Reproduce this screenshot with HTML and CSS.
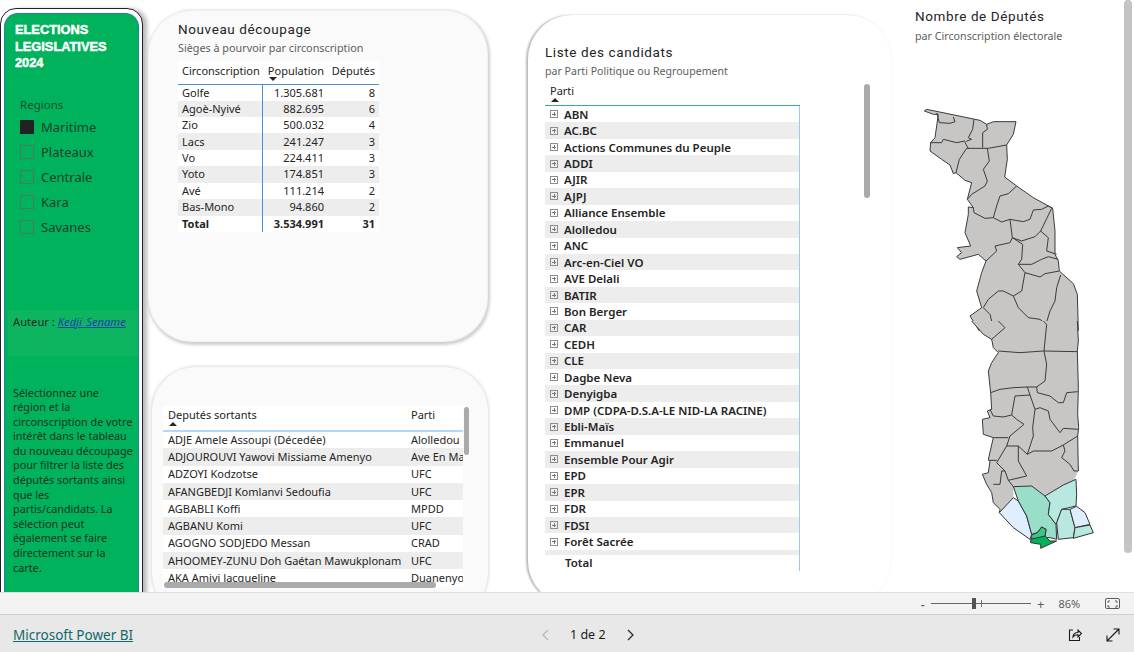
FILE: index.html
```html
<!DOCTYPE html>
<html lang="fr">
<head>
<meta charset="utf-8">
<title>Elections législatives 2024</title>
<link rel="stylesheet" href="styles.css">
</head>
<body>
<main class="canvas">
  <aside class="side-frame">
    <div class="side">
      <h1 class="side-title">ELECTIONS<br>LEGISLATIVES<br>2024</h1>
      <div class="slicer">
        <div class="slicer-label">Regions</div>
        <div class="slicer-row"><span class="box box-on"></span>Maritime</div>
        <div class="slicer-row"><span class="box"></span>Plateaux</div>
        <div class="slicer-row"><span class="box"></span>Centrale</div>
        <div class="slicer-row"><span class="box"></span>Kara</div>
        <div class="slicer-row"><span class="box"></span>Savanes</div>
      </div>
      <div class="author">Auteur : <a class="author-link" href="#">Kedji_Sename</a></div>
      <p class="help">Sélectionnez une<br>région et la<br>circonscription de votre<br>intérêt dans le tableau<br>du nouveau découpage<br>pour filtrer la liste des<br>députés sortants ainsi<br>que les<br>partis/candidats. La<br>sélection peut<br>également se faire<br>directement sur la<br>carte.</p>
    </div>
  </aside>

  <section class="col-mid">
    <div class="card card-top">
      <h2 class="title">Nouveau découpage</h2>
      <div class="subtitle">Sièges à pourvoir par circonscription</div>
      <table class="tbl tbl-dec">
        <thead>
          <tr><th class="c-name">Circonscription</th><th class="c-pop num-head"><span class="sort-wrap">Population<i class="arrow-down"></i></span></th><th class="c-dep num-head">Députés</th></tr>
        </thead>
        <tbody>
          <tr><td class="c-name">Golfe</td><td class="c-pop">1.305.681</td><td class="c-dep">8</td></tr>
          <tr class="alt"><td class="c-name">Agoè-Nyivé</td><td class="c-pop">882.695</td><td class="c-dep">6</td></tr>
          <tr><td class="c-name">Zio</td><td class="c-pop">500.032</td><td class="c-dep">4</td></tr>
          <tr class="alt"><td class="c-name">Lacs</td><td class="c-pop">241.247</td><td class="c-dep">3</td></tr>
          <tr><td class="c-name">Vo</td><td class="c-pop">224.411</td><td class="c-dep">3</td></tr>
          <tr class="alt"><td class="c-name">Yoto</td><td class="c-pop">174.851</td><td class="c-dep">3</td></tr>
          <tr><td class="c-name">Avé</td><td class="c-pop">111.214</td><td class="c-dep">2</td></tr>
          <tr class="alt"><td class="c-name">Bas-Mono</td><td class="c-pop">94.860</td><td class="c-dep">2</td></tr>
          <tr class="total"><td class="c-name">Total</td><td class="c-pop">3.534.991</td><td class="c-dep">31</td></tr>
        </tbody>
      </table>
    </div>
    <div class="card card-bottom">
      <div class="dep-wrap">
        <table class="tbl tbl-dep">
          <thead>
            <tr><th class="d-name"><span class="sort-wrap">Deputés sortants<i class="arrow-up"></i></span></th><th class="d-part">Parti</th></tr>
          </thead>
          <tbody>
            <tr><td class="d-name">ADJE Amele Assoupi (Décedée)</td><td class="d-part">Alolledou</td></tr>
            <tr class="alt"><td class="d-name">ADJOUROUVI Yawovi Missiame Amenyo</td><td class="d-part">Ave En Ma</td></tr>
            <tr><td class="d-name">ADZOYI Kodzotse</td><td class="d-part">UFC</td></tr>
            <tr class="alt"><td class="d-name">AFANGBEDJI Komlanvi Sedoufia</td><td class="d-part">UFC</td></tr>
            <tr><td class="d-name">AGBABLI Koffi</td><td class="d-part">MPDD</td></tr>
            <tr class="alt"><td class="d-name">AGBANU Komi</td><td class="d-part">UFC</td></tr>
            <tr><td class="d-name">AGOGNO SODJEDO Messan</td><td class="d-part">CRAD</td></tr>
            <tr class="alt"><td class="d-name">AHOOMEY-ZUNU Doh Gaétan Mawukplonam</td><td class="d-part">UFC</td></tr>
            <tr><td class="d-name">AKA Amivi Jacqueline</td><td class="d-part">Duanenyo</td></tr>
          </tbody>
        </table>
        <div class="thumb thumb-dep-v"></div>
        <div class="thumb thumb-dep-h"></div>
      </div>
    </div>
  </section>

  <section class="card card-list">
    <h2 class="title">Liste des candidats</h2>
    <div class="subtitle subtitle-list">par Parti Politique ou Regroupement</div>
    <div class="list">
      <div class="list-head"><span class="sort-wrap">Parti<i class="arrow-up"></i></span></div>
      <div class="list-row"><i class="plus"></i>ABN</div>
      <div class="list-row alt"><i class="plus"></i>AC.BC</div>
      <div class="list-row"><i class="plus"></i>Actions Communes du Peuple</div>
      <div class="list-row alt"><i class="plus"></i>ADDI</div>
      <div class="list-row"><i class="plus"></i>AJIR</div>
      <div class="list-row alt"><i class="plus"></i>AJPJ</div>
      <div class="list-row"><i class="plus"></i>Alliance Ensemble</div>
      <div class="list-row alt"><i class="plus"></i>Alolledou</div>
      <div class="list-row"><i class="plus"></i>ANC</div>
      <div class="list-row alt"><i class="plus"></i>Arc-en-Ciel VO</div>
      <div class="list-row"><i class="plus"></i>AVE Delali</div>
      <div class="list-row alt"><i class="plus"></i>BATIR</div>
      <div class="list-row"><i class="plus"></i>Bon Berger</div>
      <div class="list-row alt"><i class="plus"></i>CAR</div>
      <div class="list-row"><i class="plus"></i>CEDH</div>
      <div class="list-row alt"><i class="plus"></i>CLE</div>
      <div class="list-row"><i class="plus"></i>Dagbe Neva</div>
      <div class="list-row alt"><i class="plus"></i>Denyigba</div>
      <div class="list-row"><i class="plus"></i>DMP (CDPA-D.S.A-LE NID-LA RACINE)</div>
      <div class="list-row alt"><i class="plus"></i>Ebli-Maïs</div>
      <div class="list-row"><i class="plus"></i>Emmanuel</div>
      <div class="list-row alt"><i class="plus"></i>Ensemble Pour Agir</div>
      <div class="list-row"><i class="plus"></i>EPD</div>
      <div class="list-row alt"><i class="plus"></i>EPR</div>
      <div class="list-row"><i class="plus"></i>FDR</div>
      <div class="list-row alt"><i class="plus"></i>FDSI</div>
      <div class="list-row"><i class="plus"></i>Forêt Sacrée</div>
      <div class="list-sliver"></div>
      <div class="list-total">Total</div>
    </div>
    <div class="thumb thumb-list"></div>
  </section>

  <section class="col-map">
    <h2 class="title">Nombre de Députés</h2>
    <div class="subtitle subtitle-map">par Circonscription électorale</div>
    <svg class="map" viewBox="915 100 209 470" width="209" height="470" aria-label="Carte du Togo">
      <g transform="translate(900 90) scale(.33333)">
        <path class="land" d="M73 60 80 55 240 88 260 100 280 92 348 92 340 130 320 162 322 205 314 258 350 285 400 320 458 352 465 420 465 490 475 510 478 540 520 578 532 610 535 750 278 750 238 720 210 675 245 650 230 600 245 545 258 510 235 490 180 505 170 497 185 485 172 470 212 465 195 425 205 370 205 348 220 350 202 325 215 275 195 268 168 245 160 248 150 222 125 205 90 180 92 155 105 140 115 70 100 70Z"/>
        <path class="line" d="M73 60 80 55 240 88 260 100 280 92 348 92 340 130 320 162 322 205 314 258 350 285 400 320 458 352 465 420 465 490 475 510 478 540 520 578 532 610 535 720M238 720 210 675 245 650 230 600 245 545 258 510 235 490 180 505 170 497 185 485 172 470 212 465 195 425 205 370 205 348 220 350 202 325 215 275 195 268 168 245 160 248 150 222 125 205 90 180 92 155 105 140 115 70 100 70 73 60"/>
        <path class="line" d="M110 66 118 95 150 97 165 92 160 78M222 85 218 115 205 140 215 145 200 150 195 155 205 172M92 155 125 155 130 145 170 155 195 150M200 172 265 172 320 162M260 100 262 115 248 125 248 170M200 172 178 205 168 245M262 172 268 210 250 235 262 270 255 285 215 310 202 325M350 285 325 308 300 315 290 345 280 380 255 382 222 365 220 350M280 380 305 393 330 385 370 392 390 385 400 357 425 355 445 345 458 352M330 385 337 440 365 450 405 437 422 420 455 352M337 440 330 455 285 465 290 480 258 510M337 440 368 460 365 505 355 520 375 520 395 520 425 505 445 497 475 505M422 420 445 440 440 480 470 490M355 520 375 545 420 558 435 548 478 540M375 545 365 600 340 615 310 600 295 600 265 625 250 650M340 615 355 650 385 680 420 685 438 700 438 720M482 552 470 590 465 630 450 660 438 700M250 650 270 670 275 690 315 712 300 720"/>
      </g>
      <g transform="translate(950 320) scale(.33333)">
        <path class="land" d="M65 0 382 0 385 60 382 90 385 200 383 280 386 320 383 345 385 450 372 478 285 525 245 495 190 497 190 530 148 575 150 565 130 545 125 515 110 490 97 460 115 455 120 420 115 415 130 350 100 340 97 295 120 290 112 270 125 265 122 215 115 150 125 125 145 95 130 80 125 55 100 40Z"/>
        <path class="line" d="M65 0 100 40 125 55 130 80 145 95 125 125 115 150 122 215 125 265 112 270 120 290 97 295 100 340 130 350 115 415 120 420 115 455 97 460 110 490 125 515 130 545 150 565 148 575M382 0 385 60 382 90 385 200 383 280 386 320 383 345 385 450 372 450"/>
        <path class="line" d="M125 55 165 20 145 0M145 90 210 95 280 90 382 92M280 0 290 10 282 90 290 130 285 180 260 198 232 198 190 200 150 205 122 215M260 198 262 215 300 225 325 245 340 245 350 215 383 212M232 198 240 222 195 225 185 282 160 288 130 285 120 265M240 222 255 265 248 320 250 345 232 400 205 375 170 375 180 345 222 310 200 295 185 282M255 265 270 260 295 270 300 295 330 335 340 322 385 325M232 400 250 390 305 390 340 372 383 345M340 372 345 390 335 410 360 430 372 450M205 375 205 420 230 465 175 478 165 450 155 450 150 490 130 490M170 375 140 425 165 450M130 350 175 350M115 418 140 418M175 478 190 497"/>
        <path class="r-light" d="M190 530 205 540 230 585 245 640 240 655 190 620 148 575Z"/>
        <path class="r-mid" d="M190 497 245 495 285 525 300 545 295 580 318 610 320 655 300 650 285 650 288 625 275 618 262 635 245 640 230 585 205 540Z"/>
        <path class="r-teal" d="M285 525 340 492 378 475 380 520 378 555 335 565 320 605 318 610 295 580 300 545Z"/>
        <path class="r-teal" d="M320 605 335 565 360 565 375 620 370 650 325 655Z"/>
        <path class="r-light" d="M360 565 380 556 405 575 420 610 375 620Z"/>
        <path class="r-teal" d="M375 620 420 612 430 635 370 652Z"/>
        <path class="r-small" d="M245 642 262 635 275 618 288 625 285 648 245 655Z"/>
        <path class="r-golfe" d="M242 655 285 645 300 660 320 660 272 682 272 670 242 665Z"/>
      </g>
    </svg>
  </section>
  <div class="page-scroll"><div class="page-thumb"></div></div>
</main>

<div class="zoombar">
  <span class="zoom-minus">-</span>
  <div class="zoom-track"><i class="zoom-knob"></i><i class="zoom-tick"></i></div>
  <span class="zoom-plus">+</span>
  <span class="zoom-val">86%</span>
  <svg class="ico-fit" width="16" height="12" viewBox="0 0 16 12"><rect x=".5" y=".5" width="14" height="10" rx="1.5"/><path d="M3 5V3h2M10 3h2v2M12 7v2h-2M5 9H3V7"/></svg>
</div>
<footer class="footer">
  <a class="pbi" href="#">Microsoft Power BI</a>
  <nav class="pager">
    <svg class="chev chev-off" width="9" height="12" viewBox="0 0 9 12"><path d="M7 1 2 6l5 5"/></svg>
    <span class="pager-text">1 de 2</span>
    <svg class="chev" width="9" height="12" viewBox="0 0 9 12"><path d="M2 1l5 5-5 5"/></svg>
  </nav>
  <div class="foot-icons">
    <svg class="ico" width="14" height="14" viewBox="0 0 14 14"><path d="M5 2H1.500v10.500h10V9M5 9c0-3 2-4.500 5-4.500V2l3.500 3.500L10 9V6.800C8 6.800 6 7.300 5 9Z"/></svg>
    <svg class="ico" width="14" height="14" viewBox="0 0 14 14"><path d="M1 13 13 1M7.500 1H13v5.500M1 7.500V13h5.500"/></svg>
  </div>
</footer>
</body>
</html>
```

FILE: styles.css
```css
* { box-sizing: border-box; }
html, body { margin: 0; padding: 0; }
body {
  width: 1134px;
  height: 652px;
  overflow: hidden;
  background: #fff;
  font-family: "Noto Sans", "Open Sans", sans-serif;
  color: #252423;
}
h1, h2, p { margin: 0; font-weight: normal; }

.canvas { display: flex; height: 592px; overflow: hidden; background: #fff; }

/* Sidebar */
.side-frame {
  flex: none;
  width: 143px;
  height: 620px;
  margin: 8px 0 0 0;
  padding: 3.500px 3px 0;
  border: 1.500px solid #222;
  border-radius: 16px;
  background: #fff;
  box-shadow: 5px 0 4px -1px #bbb;
}
.side {
  height: 100%;
  background: #00b25b;
  border: 1px solid #1b84a0;
  border-bottom: 0;
  border-radius: 14px 14px 0 0;
  padding: 8.500px 0 0;
}
.side-title {
  margin-left: 10px;
  font: bold 12.800px/16.500px "Liberation Sans", Arial, sans-serif;
  color: #fff;
  -webkit-text-stroke: .5px #fff;
}
.slicer { margin: 25px 0 0 15px; }
.slicer-label { font-size: 11.500px; line-height: 16px; color: #14512f; margin-bottom: 2px; }
.slicer-row {
  display: flex;
  align-items: center;
  gap: 7px;
  height: 25px;
  font-size: 13px;
  color: #1d3f2c;
}
.box { width: 14px; height: 14px; border: 1px solid #4d7a5e; }
.box-on { background: #222; border-color: #222; }
.author {
  margin: 70px 0 0 3px;
  height: 46px;
  padding: 4px 0 0 5px;
  background: #0eb561;
  font-size: 11.200px;
  line-height: 16px;
  color: #1d2b24;
}
.author-link { color: #1f3fb0; font-style: italic; }
.help {
  margin: 30px 0 0 8px;
  font-size: 10.800px;
  line-height: 14.600px;
  color: #12331f;
  white-space: nowrap;
}

/* Cards */
.col-mid { flex: none; width: 346px; margin-left: 5px; }
.card { background: #fafafa; border-radius: 44px; }
.card-top {
  width: 340px;
  height: 332px;
  margin-top: 10px;
  padding: 10px 0 0 30px;
  box-shadow: 1px 1.500px 3px 1px #d0d0d0, inset 0 0 2px #ddd;
}
.card-bottom {
  width: 336px;
  height: 250px;
  margin: 25px 0 0 4px;
  padding: 39px 0 0 11px;
  box-shadow: 0 0 3px 1px #ddd;
}
.title {
  font: 400 13.500px/18px Roboto, sans-serif;
  letter-spacing: .6px;
  color: #252423;
}
.subtitle {
  margin-top: 2px;
  font-size: 10.800px;
  line-height: 16px;
  color: #605e5c;
}

/* Tables */
.tbl { border-collapse: collapse; table-layout: fixed; background: #fff; font-size: 11px; }
.tbl th { font-weight: normal; text-align: left; padding: 0; vertical-align: top; }
.tbl td { padding: 0; white-space: nowrap; overflow: hidden; }
.alt { background: #ededed; }
.sort-wrap { position: relative; display: inline-block; }
.arrow-down, .arrow-up { position: absolute; left: 1px; width: 0; height: 0; border: 4px solid transparent; }
.arrow-down { top: 14px; border-top: 4px solid #252423; border-bottom: 0; }
.arrow-up { top: 15px; border-bottom: 4px solid #252423; border-top: 0; }

.tbl-dec { width: 201px; margin-top: 5px; }
.tbl-dec thead tr { height: 23px; border-bottom: 1px solid #4a90d9; }
.tbl-dec th { padding-top: 2px; }
.tbl-dec tbody tr { height: 16.450px; line-height: 16px; }
.c-name { width: 84px; padding-left: 4px !important; border-right: 1px solid #4a90d9; }
.tbl-dec th.c-name { border-right: 0; }
.c-pop { width: 62px; text-align: right; }
.c-dep { width: 55px; text-align: right; padding-right: 4px !important; }
.num-head { text-align: right !important; }
.total td { font-weight: bold; }

.dep-wrap { position: relative; width: 306px; }
.tbl-dep { width: 300px; }
.tbl-dep thead tr { height: 25px; border-bottom: 2px solid #b5d7f5; }
.tbl-dep th { padding-top: 1px; }
.tbl-dep tbody tr { height: 17.300px; line-height: 16px; }
.d-name { width: 243px; padding-left: 5px !important; }
.d-part { width: 57px; padding-left: 5px !important; }
.thumb { position: absolute; background: #aaa; border-radius: 3px; }
.thumb-dep-v { left: 301px; top: 1px; width: 5px; height: 48px; }
.thumb-dep-h { left: 1px; top: 176px; width: 272px; height: 6px; }

/* List */
.card-list {
  position: relative;
  flex: none;
  width: 363px;
  height: 590px;
  margin: 15px 0 0 34px;
  padding: 28px 0 0 17px;
  background: #fff;
  box-shadow: -1.500px 0 2px #bbb;
  border-radius: 44px;
}
.subtitle-list { font-size: 10.600px; }
.list { width: 255px; margin-top: 4px; font-size: 11.500px; }
.list-head {
  height: 23px;
  padding: 0 0 0 5px;
  border-bottom: 1px solid #3b9bf0;
  font-size: 11px;
  line-height: 16px;
  background: #fff;
}
.list-row {
  display: flex;
  align-items: center;
  height: 16.450px;
  font-weight: 600;
  color: #252423;
  white-space: nowrap;
  border-right: 1px solid #9cc8f2;
}
.plus {
  flex: none;
  width: 8px;
  height: 8px;
  margin: 0 6px 0 5px;
  border: 1px solid #8d8d8d;
  background:
    linear-gradient(#777, #777) center / 4px 1px no-repeat,
    linear-gradient(#777, #777) center / 1px 4px no-repeat;
}
.list-sliver { height: 5px; background: #ededed; border-right: 1px solid #9cc8f2; }
.list-total { height: 16px; padding-left: 20px; font-weight: 600; line-height: 16px; border-right: 1px solid #9cc8f2; }
.thumb-list { left: 336px; top: 69px; width: 6px; height: 114px; }

/* Map */
.col-map { flex: none; width: 209px; margin-left: 24px; padding-top: 7px; }
.subtitle-map { margin-top: 3px; font-size: 10.700px; }
.map { display: block; margin-top: 57px; overflow: visible; }
.land { fill: #c8c6c4; stroke: none; }
.line { fill: none; stroke: #3a3a3a; stroke-width: 3; stroke-linejoin: round; }
.r-light, .r-mid, .r-teal, .r-small, .r-golfe { stroke: #333; stroke-width: 3; stroke-linejoin: round; }
.r-light { fill: #deeeff; }
.r-mid { fill: #98dec8; }
.r-teal { fill: #b9e8e0; }
.r-small { fill: #3fc487; }
.r-golfe { fill: #00b25b; }

.page-scroll { flex: none; width: 8px; }
.page-thumb { height: 553px; background: #c4c4c4; border-radius: 4px; }

/* Zoom bar */
.zoombar {
  display: flex;
  align-items: center;
  height: 23px;
  padding-left: 921px;
  background: #f3f3f3;
  border-top: 1px solid #e1e1e1;
  border-bottom: 1px solid #cfcfcf;
  font-size: 11px;
  color: #605e5c;
}
.zoom-minus { width: 10px; font-weight: bold; line-height: 12px; }
.zoom-track { position: relative; width: 100px; height: 1px; background: #666; }
.zoom-knob { position: absolute; left: 41px; top: -5px; width: 4px; height: 11px; background: #555; }
.zoom-tick { position: absolute; left: 50px; top: -3px; width: 1px; height: 7px; background: #777; }
.zoom-plus { margin-left: 6px; font-size: 13px; line-height: 14px; }
.zoom-val { margin-left: 14px; font-size: 11px; }
.ico-fit { margin-left: 25px; fill: none; stroke: #605e5c; }

/* Footer */
.footer {
  position: relative;
  display: flex;
  align-items: center;
  justify-content: space-between;
  height: 37px;
  padding: 2px 14px 0 13px;
  background: #e8e8e8;
}
.pbi { font-size: 13.500px; color: #0f6a6a; }
.pager { position: absolute; left: 541px; top: 12px; display: flex; align-items: center; }
.pager-text { margin: 0 20px; font-size: 12.500px; line-height: 16px; color: #1b1a19; }
.chev { fill: none; stroke: #252423; stroke-width: 1.200; }
.chev-off { stroke: #b5b5b5; }
.foot-icons { display: flex; gap: 24px; }
.ico { fill: none; stroke: #1b1a19; stroke-width: 1.100; }
```
